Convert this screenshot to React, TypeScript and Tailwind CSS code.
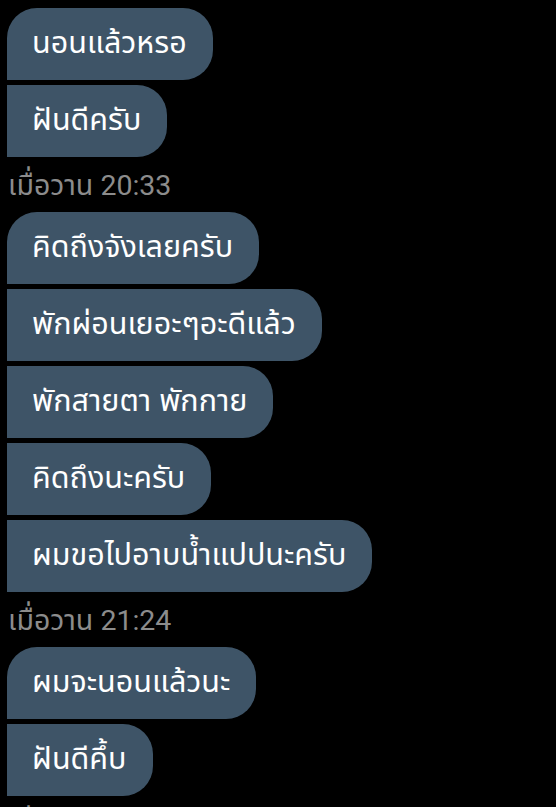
const groups: { time?: string; messages: string[] }[] = [
  { messages: ["นอนแล้วหรอ", "ฝันดีครับ"] },
  {
    time: "เมื่อวาน 20:33",
    messages: [
      "คิดถึงจังเลยครับ",
      "พักผ่อนเยอะๆอะดีแล้ว",
      "พักสายตา พักกาย",
      "คิดถึงนะครับ",
      "ผมขอไปอาบน้ำแปปนะครับ",
    ],
  },
  { time: "เมื่อวาน 21:24", messages: ["ผมจะนอนแล้วนะ", "ฝันดีคึ้บ"] },
  { time: "เมื่อวาน 21:30", messages: [] },
];

function Bubble({ text, first }: { text: string; first: boolean }) {
  return (
    <div
      className={`self-start shrink-0 h-[72px] flex items-center bg-[#3e5467] pl-[25px] pr-[26px] pt-[2px] text-[30.5px] text-white rounded-r-[30px] ${
        first ? "rounded-tl-[30px]" : ""
      }`}
      style={{ fontFamily: '"Noto Sans Thai", "Noto Sans", sans-serif' }}
    >
      {text}
    </div>
  );
}

export default function App() {
  return (
    <div className="h-[807px] overflow-hidden bg-black pl-[7px] pt-[8px] flex flex-col gap-[5px]">
      {groups.map((g, gi) => (
        <div key={gi} className="contents">
          {g.time && (
            <div
              className="shrink-0 h-[45px] flex items-center pl-px pt-[3px] text-[28.5px] text-[#8c8c8c]"
              style={{ fontFamily: 'Roboto, "Noto Sans Thai", sans-serif' }}
            >
              {g.time}
            </div>
          )}
          {g.messages.map((m, i) => (
            <Bubble key={i} text={m} first={i === 0} />
          ))}
        </div>
      ))}
    </div>
  );
}
